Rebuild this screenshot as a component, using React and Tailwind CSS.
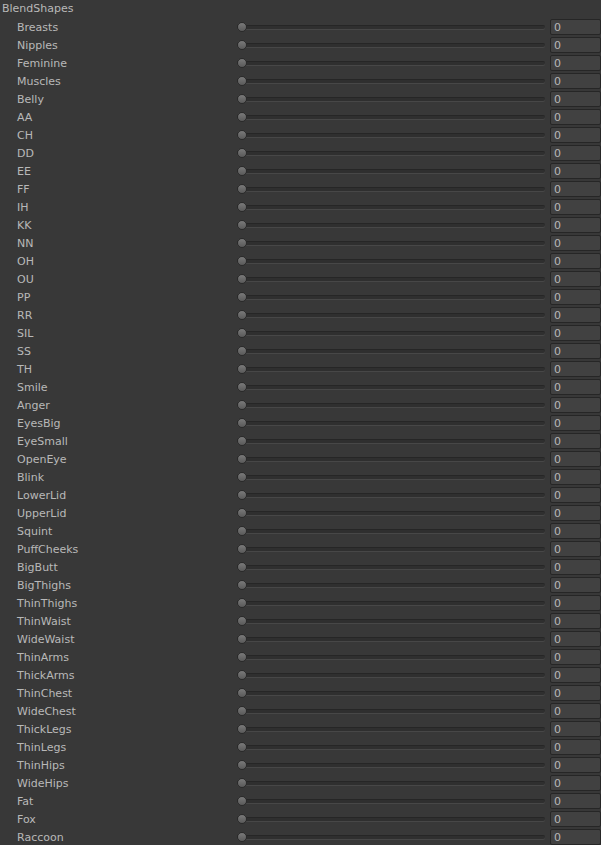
const shapes = [
  'Breasts', 'Nipples', 'Feminine', 'Muscles', 'Belly', 'AA', 'CH', 'DD', 'EE', 'FF',
  'IH', 'KK', 'NN', 'OH', 'OU', 'PP', 'RR', 'SIL', 'SS', 'TH',
  'Smile', 'Anger', 'EyesBig', 'EyeSmall', 'OpenEye', 'Blink', 'LowerLid', 'UpperLid', 'Squint', 'PuffCheeks',
  'BigButt', 'BigThighs', 'ThinThighs', 'ThinWaist', 'WideWaist', 'ThinArms', 'ThickArms', 'ThinChest', 'WideChest', 'ThickLegs',
  'ThinLegs', 'ThinHips', 'WideHips', 'Fat', 'Fox', 'Raccoon',
]

function ShapeRow({ name }) {
  return (
    <div className="flex h-[18px] items-center">
      <span className="w-[232px] shrink-0 pl-[17px] leading-none">{name}</span>
      {/* slider */}
      <div className="relative flex h-full w-[313px] shrink-0 items-center">
        <div className="ml-[5px] h-[4px] w-full rounded-full border-t border-[#262626] bg-[#2f2f2f] shadow-[0_1px_0_#474747]" />
        <div className="absolute left-[5px] top-[4px] h-[10px] w-[10px] rounded-full border border-[#2a2a2a] bg-gradient-to-b from-[#7a7a7a] to-[#5a5a5a]" />
      </div>
      <div className="ml-[5px] flex h-[16px] flex-1 items-center rounded-[2px] border border-[#262626] bg-[#414141] pl-[3px] leading-none text-[#b8b8b8]">
        0
      </div>
    </div>
  )
}

export default function App() {
  return (
    <div className="min-h-screen bg-[#383838] font-['DejaVu_Sans',sans-serif] text-[11px] text-[#b8b8b8]">
      <div className="flex h-[18px] items-center pl-[2px]">BlendShapes</div>
      {shapes.map((s) => (
        <ShapeRow key={s} name={s} />
      ))}
    </div>
  )
}
